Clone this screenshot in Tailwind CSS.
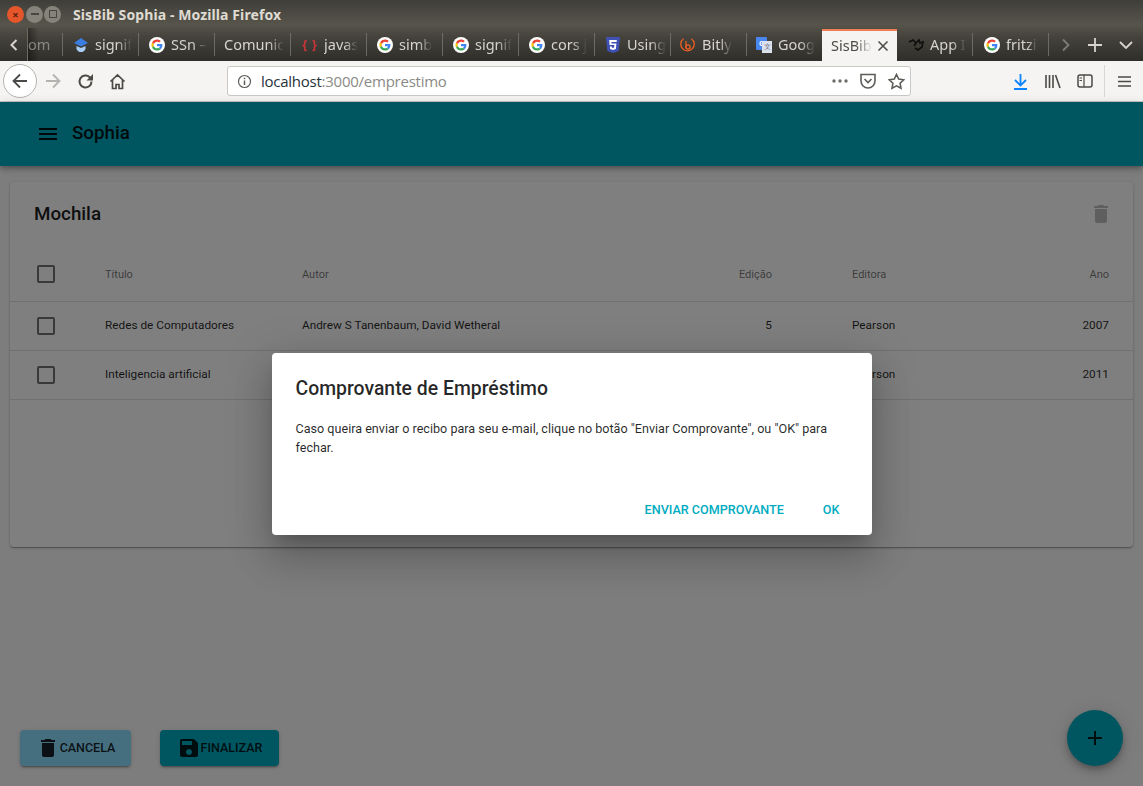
<!DOCTYPE html>
<html lang="en">
<head>
    <meta charset="UTF-8">
    <meta name="viewport" content="width=device-width, initial-scale=1.0">
    <title>SisBib Sophia</title>
    <script src="https://cdn.jsdelivr.net/npm/@tailwindcss/browser@4"></script>
</head>
<body class="h-[786px] w-[1143px] overflow-hidden flex flex-col bg-[#fafafa] font-['Roboto',sans-serif]">
    <svg class="hidden">
        <symbol id="g" viewBox="0 0 48 48">
            <circle cx="24" cy="24" r="24" fill="#fff"/>
            <path fill="#ea4335" d="M24 14c2.700 0 4.900 1 6.600 2.600l4.700-4.700C32.300 9.100 28.500 7.400 24 7.400c-6.500 0-12.100 3.700-14.800 9.200l5.500 4.300C16 17 19.700 14 24 14z"/>
            <path fill="#4285f4" d="M40.200 24.400c0-1.200-.1-2.300-.3-3.400H24v6.500h9.100c-.4 2.100-1.600 3.900-3.400 5.100l5.300 4.100c3.100-2.900 5.200-7.100 5.200-12.300z"/>
            <path fill="#fbbc05" d="M14.700 27.100c-.3-1-.5-2-.5-3.100s.2-2.100.5-3.100l-5.500-4.300C8 18.900 7.400 21.400 7.400 24s.6 5.100 1.800 7.400l5.500-4.300z"/>
            <path fill="#34a853" d="M24 40.600c4.500 0 8.200-1.500 11-4l-5.300-4.100c-1.500 1-3.400 1.600-5.700 1.600-4.300 0-8-2.900-9.300-6.900l-5.500 4.300c2.700 5.400 8.300 9.100 14.800 9.100z"/>
        </symbol>
        <symbol id="trash" viewBox="0 0 24 24">
            <path fill="currentColor" d="M6 19c0 1.100.9 2 2 2h8c1.100 0 2-.9 2-2V7H6v12zM19 4h-3.500l-1-1h-5l-1 1H5v2h14V4z"/>
        </symbol>
    </svg>

    <!-- browser chrome -->
    <div class="h-[61px] shrink-0 flex flex-col bg-[linear-gradient(#3f3e39_0%,#57544b_40%,#45433c_60%,#2f2e2a_100%)] font-['Noto_Sans',sans-serif]">
        <div class="h-[28px] flex items-center pl-[7px]">
            <div class="w-[17px] h-[17px] rounded-full bg-[#e5562a] flex items-center justify-center text-[11px] leading-none text-[#5a2010] font-bold">×</div>
            <div class="ml-[2px] w-[17px] h-[17px] rounded-full bg-[#85837a] flex items-center justify-center"><div class="w-[8px] h-[2px] bg-[#46453f]"></div></div>
            <div class="ml-[1px] w-[17px] h-[17px] rounded-full bg-[#85837a] flex items-center justify-center"><div class="w-[8px] h-[8px] border border-[#46453f]"></div></div>
            <div class="ml-[12px] text-[14px] font-bold tracking-[0.1px] text-[#dfdbd2]">SisBib Sophia - Mozilla Firefox</div>
        </div>
        <div class="h-[33px] flex text-[14.5px] text-[#d6d4cd]">
            <div class="w-[28px] flex items-center justify-center border-r border-[#6b6a64]">
                <svg class="w-[14px] h-[14px]" viewBox="0 0 14 14" fill="none" stroke="#d6d4cd" stroke-width="2"><path d="M9.500 2l-5 5 5 5"/></svg>
            </div>
            <div class="w-[35px] bg-[linear-gradient(90deg,rgba(0,0,0,.4),transparent_30%)]">
                <div class="h-[23px] my-[5px] flex items-center border-r border-[#6b6a64]">
                    <span class="whitespace-nowrap opacity-50">om</span>
                </div>
            </div>
            <!-- tabs -->
            <div class="w-[76px] my-[5px] flex items-center gap-[6px] pl-[10px] border-r border-[#6b6a64]">
                <svg class="w-[16px] h-[16px] shrink-0" viewBox="0 0 16 16"><path fill="#3b7de0" d="M8 1l7 5-7 3.500L1 6z"/><path fill="#a8cdf5" d="M3.500 9L8 11l4.500-2v3c-1 2.500-3 3-4.500 3s-3.500-.5-4.500-3z"/></svg>
                <span class="whitespace-nowrap [mask-image:linear-gradient(90deg,#000_60%,transparent)]">signif</span>
            </div>
            <div class="w-[76px] my-[5px] flex items-center gap-[6px] pl-[10px] border-r border-[#6b6a64]">
                <svg class="w-[16px] h-[16px] shrink-0"><use href="#g"/></svg>
                <span class="whitespace-nowrap [mask-image:linear-gradient(90deg,#000_60%,transparent)]">SSn –</span>
            </div>
            <div class="w-[76px] my-[5px] flex items-center pl-[9px] border-r border-[#6b6a64]">
                <span class="whitespace-nowrap [mask-image:linear-gradient(90deg,#000_75%,transparent)]">Comunic</span>
            </div>
            <div class="w-[76px] my-[5px] flex items-center gap-[8px] pl-[11px] border-r border-[#6b6a64]">
                <span class="w-[14px] shrink-0 text-[12px] font-bold text-[#c9353a] tracking-[1px] whitespace-nowrap">{ }</span>
                <span class="whitespace-nowrap [mask-image:linear-gradient(90deg,#000_60%,transparent)]">javas</span>
            </div>
            <div class="w-[76px] my-[5px] flex items-center gap-[6px] pl-[10px] border-r border-[#6b6a64]">
                <svg class="w-[16px] h-[16px] shrink-0"><use href="#g"/></svg>
                <span class="whitespace-nowrap [mask-image:linear-gradient(90deg,#000_60%,transparent)]">simb</span>
            </div>
            <div class="w-[76px] my-[5px] flex items-center gap-[6px] pl-[10px] border-r border-[#6b6a64]">
                <svg class="w-[16px] h-[16px] shrink-0"><use href="#g"/></svg>
                <span class="whitespace-nowrap [mask-image:linear-gradient(90deg,#000_60%,transparent)]">signif</span>
            </div>
            <div class="w-[76px] my-[5px] flex items-center gap-[6px] pl-[10px] border-r border-[#6b6a64]">
                <svg class="w-[16px] h-[16px] shrink-0"><use href="#g"/></svg>
                <span class="whitespace-nowrap [mask-image:linear-gradient(90deg,#000_60%,transparent)]">cors j</span>
            </div>
            <div class="w-[76px] my-[5px] flex items-center gap-[7px] pl-[11px] border-r border-[#6b6a64]">
                <svg class="w-[14px] h-[16px] shrink-0" viewBox="0 0 14 16"><path fill="#3f51b5" d="M0 0h14l-1.300 14L7 16l-5.700-2z"/><path fill="#fff" d="M10.800 3H3.200l.4 5h4.700l-.2 2.500L7 11l-1.100-.5-.1-1H3.900l.2 2.500L7 13l2.900-1 .5-5.500H5.500l-.1-1.500h5.200z"/></svg>
                <span class="whitespace-nowrap [mask-image:linear-gradient(90deg,#000_60%,transparent)]">Using</span>
            </div>
            <div class="w-[76px] my-[5px] flex items-center gap-[7px] pl-[9px] border-r border-[#6b6a64]">
                <svg class="w-[15px] h-[15px] shrink-0" viewBox="0 0 15 15" fill="none" stroke="#ee6123" stroke-width="1.300"><path d="M3.500 1.800A6.700 6.700 0 1 0 11.500 1.800"/><path d="M6 4v6.500"/><circle cx="8" cy="10" r="2.100"/></svg>
                <span class="whitespace-nowrap [mask-image:linear-gradient(90deg,#000_60%,transparent)]">Bitly</span>
            </div>
            <div class="w-[75px] my-[5px] flex items-center gap-[6px] pl-[9px]">
                <div class="relative w-[16px] h-[16px] shrink-0">
                    <div class="w-[11px] h-[13px] bg-[#4a86f0] rounded-[1px] text-[7px] leading-[13px] text-center font-bold text-white">G</div>
                    <div class="absolute right-0 bottom-0 w-[10px] h-[12px] bg-[#dbe2ee] text-[7px] leading-[12px] text-center text-[#68717f]">文</div>
                </div>
                <span class="whitespace-nowrap [mask-image:linear-gradient(90deg,#000_60%,transparent)]">Goog</span>
            </div>
            <div class="w-[75px] mt-[1px] bg-[#f5f4f2] border-t-[2px] border-[#f07c55] flex items-center pl-[9px] text-[#4b4a46]">
                <span class="w-[41px] whitespace-nowrap [mask-image:linear-gradient(90deg,#000_60%,transparent)]">SisBib</span>
                <svg class="ml-[5px] w-[12px] h-[12px] shrink-0" viewBox="0 0 12 12" fill="none" stroke="#4b4a46" stroke-width="1.500"><path d="M1.500 1.500l9 9M10.500 1.500l-9 9"/></svg>
            </div>
            <div class="w-[76px] my-[5px] flex items-center gap-[6px] pl-[11px] border-r border-[#6b6a64]">
                <svg class="w-[16px] h-[14px] shrink-0" viewBox="0 0 16 14" fill="none" stroke="#0d0d0c" stroke-width="1.600"><path d="M1 4l4-2 3 3-2 3M8 5l3-3 1 3 3-1-1 5-4 3-3-2"/></svg>
                <span class="whitespace-nowrap [mask-image:linear-gradient(90deg,#000_60%,transparent)]">App I</span>
            </div>
            <div class="w-[76px] my-[5px] flex items-center gap-[6px] pl-[11px] border-r border-[#6b6a64]">
                <svg class="w-[16px] h-[16px] shrink-0"><use href="#g"/></svg>
                <span class="whitespace-nowrap [mask-image:linear-gradient(90deg,#000_70%,transparent)]">fritzi</span>
            </div>
            <div class="flex-1 flex items-center">
                <svg class="ml-[11px] w-[12px] h-[14px]" viewBox="0 0 12 14" fill="none" stroke="#7d7c76" stroke-width="1.800"><path d="M3 1.500l5.500 5.500L3 12.500"/></svg>
                <svg class="ml-[15px] w-[16px] h-[16px]" viewBox="0 0 16 16" fill="none" stroke="#d6d4cd" stroke-width="1.800"><path d="M8 1v14M1 8h14"/></svg>
                <svg class="ml-[16px] w-[14px] h-[10px]" viewBox="0 0 14 10" fill="none" stroke="#d6d4cd" stroke-width="1.800"><path d="M1 2l6 6 6-6"/></svg>
            </div>
        </div>
    </div>
    <div class="h-[40px] shrink-0 flex items-center bg-[#f5f4f2] text-[#4b4a46]">
        <div class="ml-[3px] w-[34px] h-[34px] rounded-full border border-[#b4b3af] bg-white flex items-center justify-center">
            <svg class="w-[18px] h-[18px]" viewBox="0 0 18 18" fill="none" stroke="#4b4a46" stroke-width="1.800"><path d="M16 9H2.500M9 2.500L2.500 9 9 15.500"/></svg>
        </div>
        <svg class="ml-[7px] w-[18px] h-[18px]" viewBox="0 0 18 18" fill="none" stroke="#b4b3af" stroke-width="1.800"><path d="M2 9h13.500M9 2.500L15.500 9 9 15.500"/></svg>
        <svg class="ml-[15px] w-[17px] h-[17px]" viewBox="0 0 17 17" fill="none" stroke="#4b4a46" stroke-width="2"><path d="M14.500 8.500a6 6 0 1 1-1.800-4.300L15 6.500"/><path fill="#4b4a46" stroke="none" d="M16 1v6.500H9.500z"/></svg>
        <svg class="ml-[15px] w-[17px] h-[17px]" viewBox="0 0 17 17" fill="none" stroke="#4b4a46" stroke-width="1.700"><path d="M1.500 8.500l7-6.500 7 6.500M3.500 7v8.500h3.500v-4h3v4h3.500V7"/></svg>
        <div class="ml-[101px] w-[684px] h-[30px] bg-white rounded-[3px] border border-[#c9c8c4] flex items-center text-[15px] font-['Open_Sans',sans-serif]">
            <svg class="ml-[9px] w-[15px] h-[15px]" viewBox="0 0 15 15" fill="none" stroke="#5e5d59" stroke-width="1.200"><circle cx="7.500" cy="7.500" r="6"/><path stroke-width="1.500" d="M7.500 6.500v4.500M7.500 3.800v1.500"/></svg>
            <div class="ml-[9px] tracking-[-0.25px]"><span class="text-[#26323a]">localhost</span><span class="text-[#8a8a86]">:3000/emprestimo</span></div>
            <svg class="ml-auto w-[16px] h-[4px]" viewBox="0 0 16 4" fill="#6d6c68"><circle cx="2" cy="2" r="1.700"/><circle cx="8" cy="2" r="1.700"/><circle cx="14" cy="2" r="1.700"/></svg>
            <svg class="ml-[12px] w-[16px] h-[16px]" viewBox="0 0 16 16" fill="none" stroke="#5e5d59" stroke-width="1.600"><path d="M1 1.500h14V8a7 7 0 0 1-14 0z"/><path d="M4.500 6l3.500 3.500L11.500 6"/></svg>
            <svg class="ml-[12px] mr-[5px] w-[17px] h-[17px]" viewBox="0 0 17 17" fill="none" stroke="#5e5d59" stroke-width="1.600"><path d="M8.500 1.500l2.200 4.600 5 .7-3.600 3.500.9 5-4.500-2.400L4 15.300l.9-5L1.300 6.800l5-.7z"/></svg>
        </div>
        <svg class="ml-[102px] w-[15px] h-[17px]" viewBox="0 0 15 17" fill="none" stroke="#0a84ff" stroke-width="1.800"><path d="M7.500 1v11M2 7l5.500 5.500L13 7M1 16h13"/></svg>
        <svg class="ml-[17px] w-[16px] h-[15px]" viewBox="0 0 16 15" fill="none" stroke="#4b4a46" stroke-width="1.600"><path d="M1 1v13M4.500 1v13M8 1v13M10.500 1l4.500 13"/></svg>
        <svg class="ml-[16px] w-[16px] h-[14px]" viewBox="0 0 16 14" fill="none" stroke="#4b4a46" stroke-width="1.500"><rect x="1" y="1" width="14" height="12" rx="2"/><path stroke-width="1.200" d="M7 1v12M2.500 4H5M2.500 6.500H5"/></svg>
        <div class="ml-[11px] w-[1px] h-[32px] bg-[#d8d7d3]"></div>
        <svg class="ml-[13px] w-[13px] h-[13px]" viewBox="0 0 13 13" fill="none" stroke="#4b4a46" stroke-width="1.700"><path d="M0 2h13M0 6.500h13M0 11h13"/></svg>
    </div>
    <div class="h-[1px] shrink-0 bg-[#c5c4c0]"></div>

    <!-- app -->
    <div class="relative flex-1 min-h-0 flex flex-col">
        <div class="h-[64px] shrink-0 flex items-center bg-[#00acc1] shadow-[0_2px_4px_-1px_rgba(0,0,0,.2),0_4px_5px_0_rgba(0,0,0,.14),0_1px_10px_0_rgba(0,0,0,.12)] text-black/90">
            <svg class="ml-[36px] w-[24px] h-[24px]" viewBox="0 0 24 24" fill="currentColor"><path d="M3 18h18v-2H3v2zm0-5h18v-2H3v2zm0-7v2h18V6H3z"/></svg>
            <div class="ml-[12px] pb-[1px] text-[18.8px] font-medium">Sophia</div>
        </div>

        <div class="mx-[10px] mt-[16px] h-[365px] bg-white rounded-[4px] shadow-[0_1px_3px_0_rgba(0,0,0,.2),0_1px_1px_0_rgba(0,0,0,.14),0_2px_1px_-1px_rgba(0,0,0,.12)]">
            <div class="h-[64px] pl-[24px] pr-[20px] flex items-center justify-between">
                <div class="text-[18.8px] font-medium text-black/90">Mochila</div>
                <svg class="w-[24px] h-[24px] text-black/25"><use href="#trash"/></svg>
            </div>
            <div class="grid grid-cols-[95px_197px_400px_70px_237px_100px] pr-[24px] h-[56px] items-center border-b border-[#e0e0e0] text-[11px] text-black/55">
                <div class="pl-[27px]"><div class="w-[18px] h-[18px] rounded-[2px] border-2 border-black/55"></div></div>
                <div class="pt-[3px]">Título</div>
                <div class="pt-[3px]">Autor</div>
                <div class="pt-[3px] text-right">Edição</div>
                <div class="pt-[3px] pl-[80px]">Editora</div>
                <div class="pt-[3px] text-right">Ano</div>
            </div>
            <div class="grid grid-cols-[95px_197px_400px_70px_237px_100px] pr-[24px] h-[49px] items-center border-b border-[#e0e0e0] text-[11.8px] text-black/85">
                <div class="pl-[27px]"><div class="w-[18px] h-[18px] rounded-[2px] border-2 border-black/55"></div></div>
                <div>Redes de Computadores</div>
                <div>Andrew S Tanenbaum, David Wetheral</div>
                <div class="text-right">5</div>
                <div class="pl-[80px]">Pearson</div>
                <div class="text-right">2007</div>
            </div>
            <div class="grid grid-cols-[95px_197px_400px_70px_237px_100px] pr-[24px] h-[49px] items-center border-b border-[#e0e0e0] text-[11.8px] text-black/85">
                <div class="pl-[27px]"><div class="w-[18px] h-[18px] rounded-[2px] border-2 border-black/55"></div></div>
                <div>Inteligencia artificial</div>
                <div></div>
                <div></div>
                <div class="pl-[80px]">Pearson</div>
                <div class="text-right">2011</div>
            </div>
        </div>

        <div class="mt-auto pb-[20px] pl-[20px] pr-[20px] flex items-end">
            <div class="w-[111px] h-[36px] flex items-center justify-center rounded-[4px] bg-[#8bdcff] shadow-[0_3px_1px_-2px_rgba(0,0,0,.2),0_2px_2px_0_rgba(0,0,0,.14),0_1px_5px_0_rgba(0,0,0,.12)] text-[12.5px] font-medium text-black/85">
                <svg class="w-[24px] h-[24px]"><use href="#trash"/></svg>CANCELA
            </div>
            <div class="ml-[29px] w-[119px] h-[36px] flex items-center justify-center rounded-[4px] bg-[#00acc1] shadow-[0_3px_1px_-2px_rgba(0,0,0,.2),0_2px_2px_0_rgba(0,0,0,.14),0_1px_5px_0_rgba(0,0,0,.12)] text-[12.5px] font-medium text-black/85">
                <svg class="w-[24px] h-[24px]" viewBox="0 0 24 24" fill="currentColor"><path d="M17 3H5c-1.110 0-2 .9-2 2v14c0 1.100.89 2 2 2h14c1.100 0 2-.9 2-2V7l-4-4zm-5 16c-1.660 0-3-1.340-3-3s1.340-3 3-3 3 1.340 3 3-1.340 3-3 3zm3-10H5V5h10v4z"/></svg>FINALIZAR
            </div>
            <div class="ml-auto w-[56px] h-[56px] rounded-full bg-[#00acc1] flex items-center justify-center shadow-[0_3px_5px_-1px_rgba(0,0,0,.2),0_6px_10px_0_rgba(0,0,0,.14),0_1px_18px_0_rgba(0,0,0,.12)]">
                <svg class="w-[24px] h-[24px] text-black/85" viewBox="0 0 24 24" fill="currentColor"><path d="M19 13h-6v6h-2v-6H5v-2h6V5h2v6h6v2z"/></svg>
            </div>
        </div>

        <!-- dialog over the page -->
        <div class="absolute inset-0 bg-black/50 flex items-center justify-center">
            <div class="w-[600px] h-[182px] flex flex-col bg-white rounded-[4px] shadow-[0_11px_15px_-7px_rgba(0,0,0,.2),0_24px_38px_3px_rgba(0,0,0,.14),0_9px_46px_8px_rgba(0,0,0,.12)]">
                <div class="px-[24px] pt-[24px] text-[19.4px] leading-[24px] font-medium text-black/85">Comprovante de Empréstimo</div>
                <div class="px-[24px] pt-[18px] text-[12.6px] leading-[19px] text-black/85">Caso queira enviar o recibo para seu e-mail, clique no botão "Enviar Comprovante", ou "OK" para fechar.</div>
                <div class="mt-auto pb-[17px] pr-[32px] flex justify-end text-[12.6px] leading-[16px] font-medium text-[#00acc1]">
                    <div>ENVIAR COMPROVANTE</div>
                    <div class="ml-[39px]">OK</div>
                </div>
            </div>
        </div>
    </div>
</body>
</html>
